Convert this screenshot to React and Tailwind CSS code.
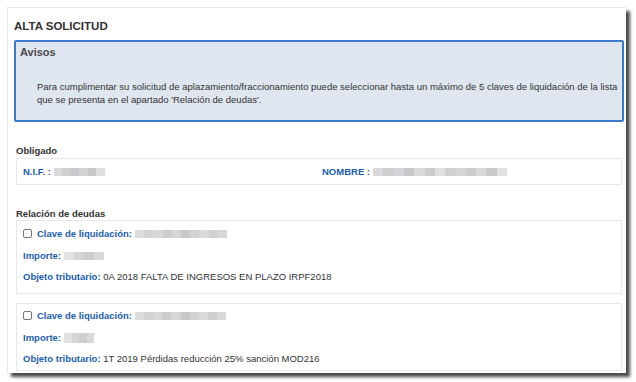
import React from "react";

function Blur({ w, shades, h = "h-[8px]" }) {
  return (
    <span className={`inline-flex ${h} items-stretch blur-[0.6px] align-middle`} style={{ width: w }}>
      {shades.map((c, i) => (
        <span key={i} className="flex-1" style={{ backgroundColor: c }} />
      ))}
    </span>
  );
}

function Debt({ clave, importe, objeto, pad }) {
  return (
    <div className={`border border-[#e2e9f1] pl-[6px] ${pad}`}>
      <div className="flex h-[13px] items-center leading-[13px]">
        <span className="mr-[5px] inline-block h-[9px] w-[9px] rounded-[2px] border border-[#777] bg-white" />
        <span className="font-bold text-[#1c5eb0]">Clave de liquidación:</span>
        <span className="ml-[3px] flex items-center">{clave}</span>
      </div>
      <div className="mt-[9px] flex h-[13px] items-center leading-[13px]">
        <span className="font-bold text-[#1c5eb0]">Importe:</span>
        <span className="ml-[3px] flex items-center">{importe}</span>
      </div>
      <div className="mt-[8px] h-[13px] leading-[13px]">
        <span className="font-bold text-[#1c5eb0]">Objeto tributario:</span>
        <span className="text-[#333]"> {objeto}</span>
      </div>
    </div>
  );
}

export default function App() {
  const g1 = ["#d9d9d9", "#cfcfcf", "#c9c6cc", "#d4d4d4", "#c8c8c8", "#dedede"];
  const g2 = ["#dcdcdc", "#d2d2d2", "#d8d8d8", "#cdcdcd", "#d6d6d6", "#c9c9c9", "#d3d3d3", "#dadada", "#cfcfcf", "#d8d8d8"];
  const g3 = ["#dadada", "#cfcfcf", "#d6d4d8", "#c8c8c8", "#d9d9d9", "#cccccc", "#e0e0e0", "#d0d0d0", "#d6d6d6", "#cdcdcd", "#d9d9d9", "#cacaca", "#e2e2e2"];
  const g4 = ["#e2e2e2", "#d6d6d6", "#cdcdcd", "#d9d9d9"];
  return (
    <div className="h-[382px] w-[636px] bg-white pl-[7px] pt-[7px]" style={{ fontFamily: '"Liberation Sans", Arial, sans-serif' }}>
      <div className="h-[366px] w-[619px] overflow-hidden border-l border-t border-[#e9e9e9] bg-white pl-[6px] pr-[2px] text-[9.5px] shadow-[4px_4px_3px_rgba(0,0,0,0.7)]">
        <div className="h-[32px] pt-[11px] text-[11.5px] font-bold leading-[14px] text-[#333]">ALTA SOLICITUD</div>
        <div className="h-[82px] rounded-[2px] border-2 border-[#3a7acb] bg-[#dfe6ef] pl-[4px] pt-[4px]">
          <div className="text-[11px] font-bold leading-[13px] text-[#4a4a4a]">Avisos</div>
          <p className="ml-[17px] mt-[21px] whitespace-nowrap text-[9.5px] leading-[13px] text-[#333]">
            Para cumplimentar su solicitud de aplazamiento/fraccionamiento puede seleccionar hasta un máximo de 5 claves de liquidación de la lista
            <br />
            que se presenta en el apartado 'Relación de deudas'.
          </p>
        </div>
        <div className="ml-[2px] mr-[2px]">
          <div className="mt-[23px] font-bold leading-[11px] text-[#333]">Obligado</div>
          <div className="mt-[2px] flex h-[27px] items-center border border-[#e2e9f1] pl-[6px] leading-[13px]">
            <div className="flex w-[299px] items-center">
              <span className="font-bold text-[#1c5eb0]">N.I.F. :</span>
              <span className="ml-[3px] flex items-center"><Blur w={51} shades={g1} /></span>
            </div>
            <div className="flex items-center">
              <span className="font-bold text-[#1c5eb0]">NOMBRE :</span>
              <span className="ml-[3px] flex items-center"><Blur w={134} shades={g3} /></span>
            </div>
          </div>
          <div className="mt-[23px] font-bold leading-[11px] text-[#333]">Relación de deudas</div>
          <div className="mt-[1px]">
            <Debt pad="pt-[6px] pb-[10px]" clave={<Blur w={92} shades={g2} />} importe={<Blur w={40} shades={g4} />} objeto="0A 2018 FALTA DE INGRESOS EN PLAZO IRPF2018" />
          </div>
          <div className="mt-[9px]">
            <Debt pad="pt-[5px] pb-[5px]" clave={<Blur w={91} shades={g2} />} importe={<Blur w={30} shades={g4} h="h-[10px]" />} objeto="1T 2019 Pérdidas reducción 25% sanción MOD216" />
          </div>
        </div>
      </div>
    </div>
  );
}
